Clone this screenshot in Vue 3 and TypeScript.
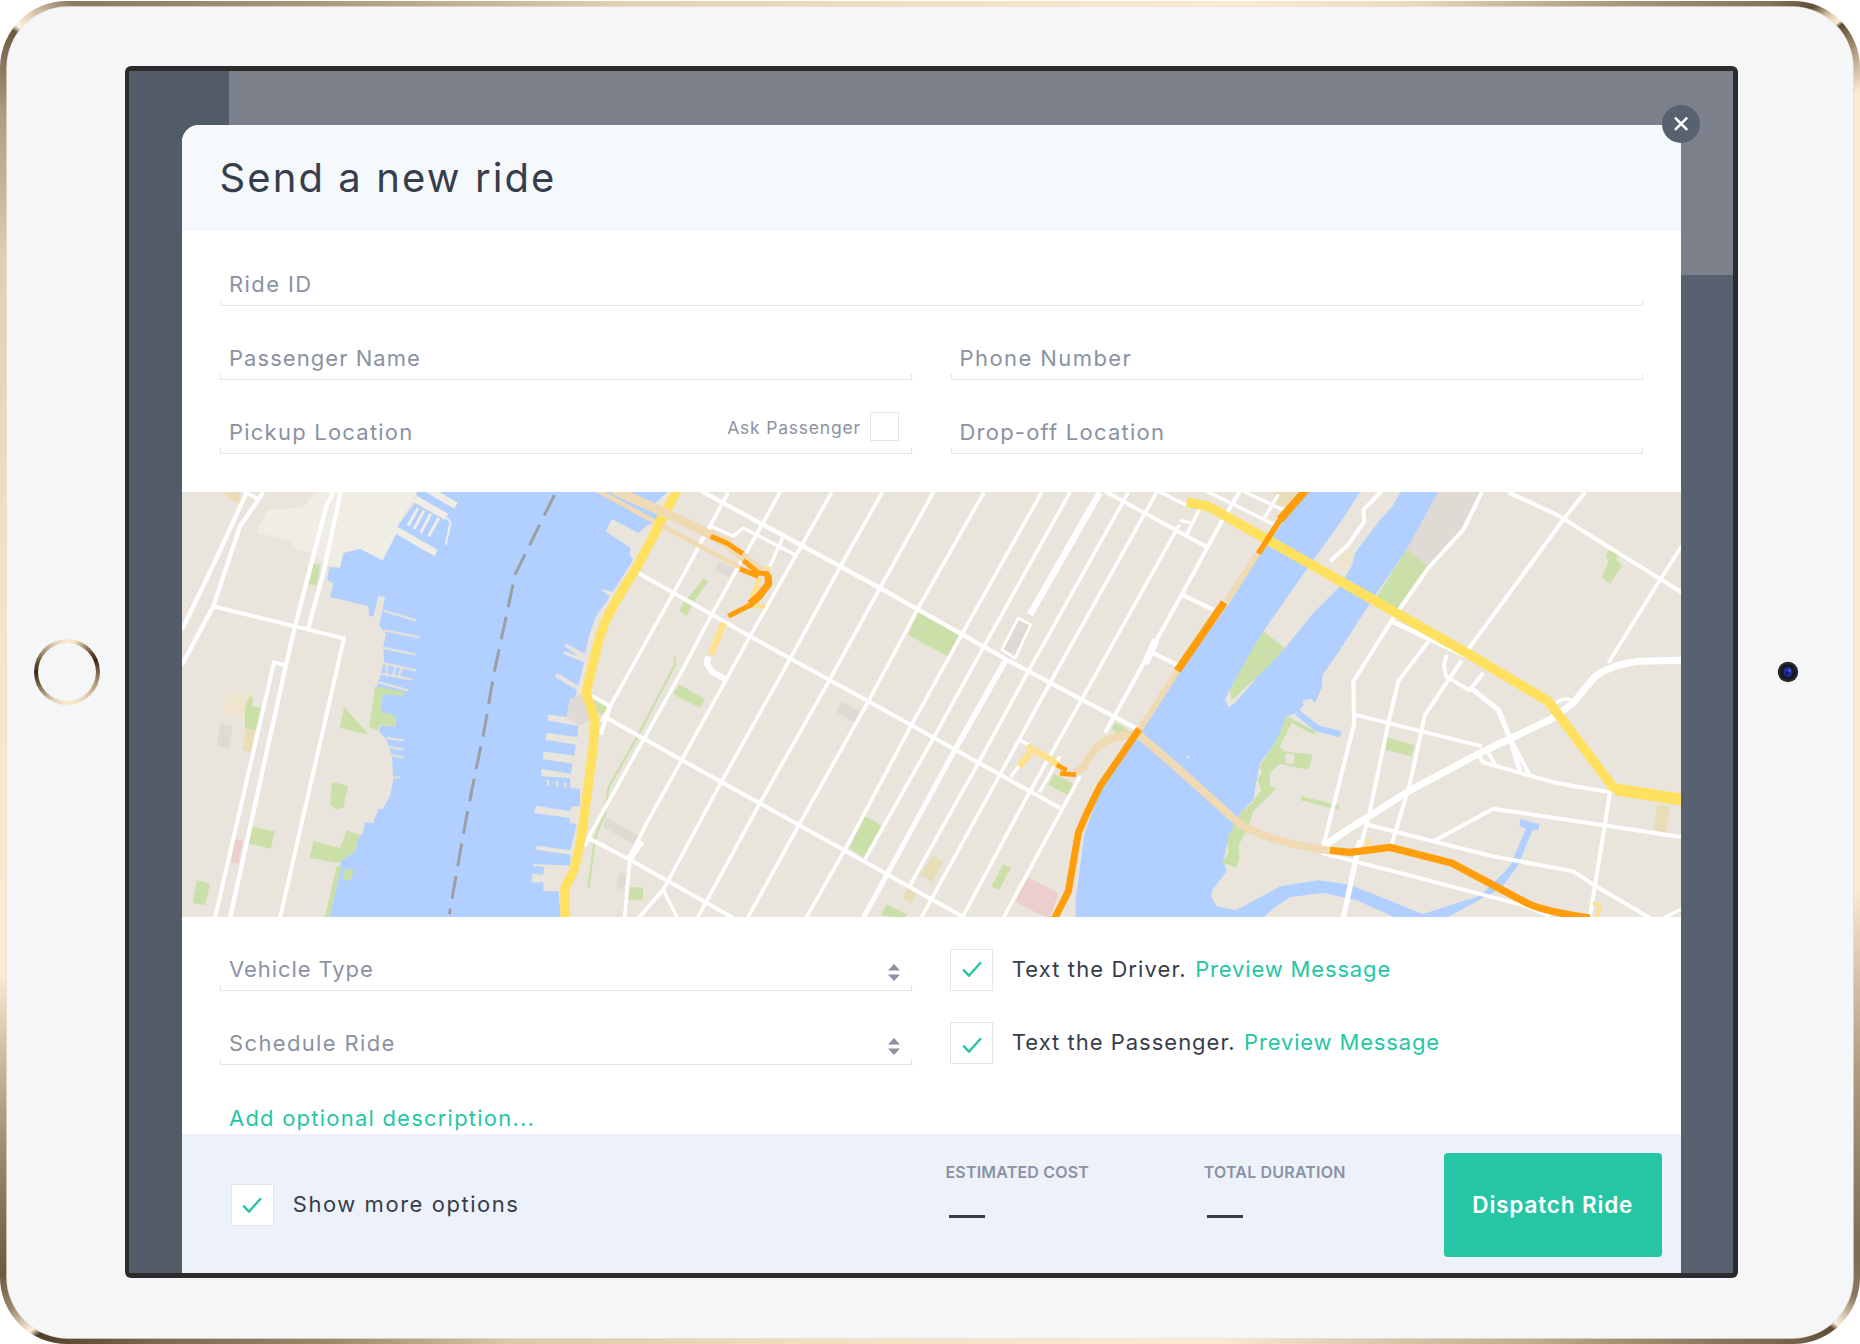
<script setup lang="ts">
import { ref } from 'vue'

interface Road {
  d: string
  w: number
}

const showMore = ref(true)
const textDriver = ref(true)
const textPassenger = ref(true)
const askPassenger = ref(false)

const checkPath = 'M1.2 8.6 L7 14.6 L19 1.2'

// Map geometry, three drawing units per CSS pixel
const streets: Road[] = [
  { d: 'M200 8L110 205L6 420', w: 13 },
  { d: 'M250 8L180 110L100 350L6 525', w: 13 },
  { d: 'M200 10L238 30', w: 11 },
  { d: 'M460 8L440 45L345 410L318 525L150 1285', w: 13 },
  { d: 'M482 8L430 250L385 415', w: 13 },
  { d: 'M100 350L492 446L300 1285', w: 12 },
  { d: 'M318 527L282 518L105 1285', w: 12 },
  { d: 'M1375 250L1710 440L2065 635L2640 955', w: 12 },
  { d: 'M1235 618L1290 650L1262 735', w: 12 },
  { d: 'M1275 682L1500 808L1990 1080L2355 1285', w: 12 },
  { d: 'M1225 1045L1350 1110L1510 1200L1660 1285', w: 12 },
  { d: 'M1565 5L2100 295L2480 510L2880 722', w: 13 },
  { d: 'M2775 5L3080 172', w: 12 },
  { d: 'M1645 8L1500 275L1265 695', w: 11 },
  { d: 'M1800 8L1595 375L1500 555L1230 1035L1215 1070', w: 11 },
  { d: 'M1955 8L1710 440L1500 820L1400 1000L1350 1100L1334 1285', w: 11 },
  { d: 'M1385 1055L1350 1105', w: 20 },
  { d: 'M2107 8L1980 232L1830 508L1625 875L1450 1200L1376 1285', w: 11 },
  { d: 'M1450 1200L1492 1285', w: 10 },
  { d: 'M2260 8L2100 295L1950 568L1740 940L1552 1285', w: 11 },
  { d: 'M2412 8L2215 355L2065 635L1860 1000L1703 1285', w: 11 },
  { d: 'M2585 8L2345 435L2195 705L1995 1080L1878 1285', w: 11 },
  { d: 'M2670 8L2412 470L2262 742L2055 1108', w: 11 },
  { d: 'M2760 8L2550 375', w: 20 },
  { d: 'M2478 510L2325 780', w: 17 },
  { d: 'M2325 780L2050 1285', w: 15 },
  { d: 'M2845 8L2545 545L2395 820L2188 1190', w: 11 },
  { d: 'M2930 8L2610 580L2460 855L2223 1285', w: 11 },
  { d: 'M2998 105L2705 630L2550 905L2346 1285', w: 11 },
  { d: 'M3180 5L3125 95L3005 315L2800 685L2775 730', w: 12 },
  { d: 'M2928 450L2895 522', w: 22 },
  { d: 'M2915 488L2995 527', w: 12 },
  { d: 'M3005 315L3100 360', w: 12 },
  { d: 'M2640 800L2578 908', w: 10 },
  { d: 'M2700 860L2470 1285', w: 11 },
  { d: 'M2518 750L2548 766M2520 825L2492 862', w: 10 },
  { d: 'M1560 155L1595 110L1660 140L1690 115L1845 195', w: 10 },
  { d: 'M1808 145L1765 240', w: 10 },
  { d: 'M1585 500L1580 522L1598 547L1638 570', w: 18 },
  { d: 'M2515 385L2465 480L2505 506L2552 405Z', w: 8 },
  { d: 'M3905 8L3850 120L3745 235L3640 385L3520 575L3522 705L3430 1068', w: 12 },
  { d: 'M3745 455L3655 575L3625 700L3565 985L3530 1110', w: 12 },
  { d: 'M3540 1050L3490 1285', w: 16 },
  { d: 'M4215 8L4150 90L3860 485', w: 12 },
  { d: 'M3845 512L3735 675L3690 880L3635 1065', w: 12 },
  { d: 'M3985 8L4130 75L4505 308', w: 12 },
  { d: 'M4505 170L4440 270L4285 520', w: 11 },
  { d: 'M4505 512L4380 515Q4300 522 4245 560L4180 640L4110 690L3900 790L3690 902L3500 1022L3430 1070', w: 21 },
  { d: 'M3800 495L3792 525L3798 560L3868 602L3910 550', w: 12 },
  { d: 'M3875 597L3955 660L3990 745L4020 845', w: 15 },
  { d: 'M3990 745L4050 858', w: 12 },
  { d: 'M3635 395L3860 500', w: 14 },
  { d: 'M3525 675L3905 770', w: 11 },
  { d: 'M3895 795L3910 818L4050 858L4130 880L4290 908L4230 1280', w: 12 },
  { d: 'M3925 790L3946 825', w: 11 },
  { d: 'M3555 1003L3760 1055L3940 1100L4180 1145L4240 1185L4410 1285', w: 12 },
  { d: 'M3760 1055L3940 957L4505 1042', w: 12 },
  { d: 'M3425 1090L3700 1160L4040 1250L4110 1280', w: 11 },
  { d: 'M4440 1290L4505 1258', w: 10 },
  { d: 'M3080 5L3290 108M3190 5L3330 70M3295 15L3250 90', w: 10 },
  { d: 'M2935 5L3030 52M3062 50L3020 135M3000 92L3040 102', w: 10 },
  { d: 'M4120 645Q4150 620 4175 632', w: 10 },
]

const parks: string[] = [
  '400,222 422,225 410,287 386,284',
  '208,620 220,622 216,650 243,654 228,722 195,718 194,655',
  '492,652 567,735 480,715',
  '585,590 675,608 670,620 608,612 603,665 648,680 643,710 598,706 592,722 568,712',
  '456,876 504,888 490,955 470,960 450,945',
  '215,1012 285,1025 272,1078 205,1062',
  '400,1053 480,1075 500,1022 540,1035 525,1085 475,1120 445,1115 390,1104',
  '470,1128 485,1130 448,1285 434,1285',
  '495,1135 520,1142 515,1170 488,1170',
  '50,1172 90,1182 75,1247 38,1240',
  '1236,625 1286,652 1272,678 1250,668',
  '1345,1192 1390,1194 1388,1232 1345,1230',
  '1570,266 1585,275 1542,335 1523,325',
  '1512,335 1537,345 1520,378 1498,365',
  '1500,585 1574,628 1560,656 1478,612',
  '2215,368 2337,437 2303,500 2184,436',
  '2055,980 2107,1008 2055,1106 2008,1075',
  '2470,1124 2493,1133 2457,1202 2433,1190',
  '2622,852 2678,882 2664,917 2605,885',
  '2120,1243 2180,1274 2170,1290 2103,1275',
  '2805,698 2845,722 2840,750 2795,718',
  '3680,180 3745,230 3655,360 3590,320',
  '3250,425 3315,475 3265,530 3155,632 3150,600 3205,500',
  '3320,680 3408,725 3403,735 3335,700 3300,770 3312,785 3398,795 3385,840 3300,822 3270,850 3270,890 3290,895 3220,965 3205,1010 3175,1070 3178,1110 3168,1135 3125,1118 3145,1090 3142,1045 3180,970 3215,940 3245,900 3232,870 3245,850 3238,830 3285,760',
  '3622,743 3703,767 3695,800 3617,780',
  '3365,920 3480,948 3475,962 3362,932',
  '4285,182 4312,192 4308,210 4327,228 4290,282 4265,262 4285,218 4278,200',
]

const plazas: string[] = [
  '122,700 158,710 145,778 110,768',
  '1280,985 1378,1040 1365,1068 1268,1010',
  '1322,1148 1342,1155 1330,1200 1305,1190',
  '1615,215 1662,235 1650,262 1604,242',
  '1985,635 2040,665 2025,700 1968,668',
  '2518,390 2548,405 2510,498 2472,478',
  '3775,5 3907,5 3850,120 3745,230 3680,180',
  '1170,630 1210,610 1240,690 1195,708 1160,682',
]

const civic: { p: string; c: string }[] = [
  { p: '145,608 205,612 192,682 132,670', c: '#efe4cd' },
  { p: '198,720 225,725 212,787 188,782', c: '#eaddb6' },
  { p: '130,8 178,8 188,45 150,30', c: '#eaddb6' },
  { p: '165,1050 188,1052 175,1122 152,1118', c: '#eccfcd' },
  { p: '2545,1163 2635,1210 2610,1285 2590,1280 2505,1235', c: '#eccfcd' },
  { p: '2260,1098 2290,1115 2258,1178 2218,1155', c: '#e8ddb9' },
  { p: '2180,1195 2212,1212 2195,1242 2170,1226', c: '#e8ddb9' },
  { p: '4432,945 4468,948 4458,1030 4420,1022', c: '#e8ddb9' },
  { p: '3280,5 3350,5 3320,50 3285,50', c: '#e8ddb9' },
  { p: '3488,180 3525,190 3500,240 3468,228', c: '#efe4cd' },
]
</script>

<template>
  <div class="stage">
    <div class="device">
      <div class="face">
        <div class="home"><div class="home-inner"></div></div>

        <div class="frame">
          <div class="screen">
            <section class="modal">
              <button class="close" aria-label="Close">
                <svg viewBox="0 0 38 38" width="38" height="38">
                  <path d="M13 12.7L25.2 24.9M25.2 12.7L13 24.9" stroke="#fff" stroke-width="2.6" fill="none" />
                </svg>
              </button>

              <header class="head"><h1>Send a new ride</h1></header>

              <div class="form top">
                <div class="field wide"><span class="t-ride">Ride ID</span></div>
                <div class="field"><span class="t-pname">Passenger Name</span></div>
                <div class="field"><span class="t-phone">Phone Number</span></div>
                <div class="field">
                  <span class="t-pick">Pickup Location</span>
                  <label class="ask" @click="askPassenger = !askPassenger">
                    <span class="t-ask">Ask Passenger</span><i class="mini"></i>
                  </label>
                </div>
                <div class="field"><span class="t-drop">Drop-off Location</span></div>
              </div>

              <svg class="map" viewBox="6 7 4497 1274" preserveAspectRatio="none">
                <rect x="0" y="0" width="4510" height="1290" fill="#e9e5dc" />
                <polygon fill="#f0ede4" points="412,0 715,0 655,105 650,135 608,212 540,178 490,190 480,232 440,225 395,190 350,180 330,155 230,128 262,62 370,52" />
                <polygon
                  fill="#b1d0ff"
                  points="712,0 708,35 655,105 650,130 608,212 540,178 490,190 480,235 448,232 442,270 460,282 450,322 565,350 568,380 580,380 595,320 615,322 598,408 618,432 610,470 612,515 598,570 588,595 608,620 600,665 648,680 645,710 600,708 597,725 620,750 636,800 640,870 630,920 608,958 595,958 580,1000 555,998 548,1032 537,1040 525,1085 485,1110 475,1140 446,1290 1142,1290 1136,1205 1090,1205 1090,1178 1055,1178 1057,1152 1090,1155 1092,1132 1058,1128 1060,1123 1170,1128 1172,1095 1068,1080 1070,1068 1172,1082 1190,1003 1170,1000 1168,985 1063,970 1068,948 1170,965 1175,950 1200,950 1200,898 1172,895 1170,865 1083,860 1085,838 1172,852 1178,822 1088,808 1090,785 1182,798 1188,765 1096,750 1100,730 1192,742 1195,710 1102,692 1105,675 1160,682 1170,630 1188,620 1190,600 1125,562 1132,550 1195,588 1212,518 1150,492 1152,484 1195,500 1154,470 1158,462 1215,492 1230,430 1245,385 1290,320 1265,302 1270,298 1297,308 1360,210 1348,195 1352,175 1277,125 1295,88 1375,130 1405,105 1435,100 1425,40 1470,0"
                />
                <g stroke="#f0ede4" fill="none">
                  <path d="M745 0L828 48M706 28L800 82M650 122L768 190" stroke-width="21" />
                  <path d="M714 55L684 108M732 62L702 118M752 72L722 130M776 85L746 140" stroke-width="9" />
                  <path d="M800 85L812 98L797 165" stroke-width="6" />
                </g>
                <g stroke="#e5e1d8" fill="none" stroke-width="7">
                  <path d="M608 363L708 392M612 422L720 443M610 475L706 494M605 520L708 542M604 552L698 570M596 578L685 602M620 745L672 752M622 772L672 780M632 795L670 804M640 863L660 864M620 525L620 560M645 528L640 562M665 535L655 562" />
                  <path d="M1103 870L1106 890M1130 874L1133 892M1155 878L1157 895" />
                </g>
                <path d="M1123 16L1005 255L985 350L940 560L915 710L890 830L860 980L840 1090L808 1274" fill="none" stroke="#9b9fa3" stroke-width="9" stroke-dasharray="69 30" />

                <polygon
                  fill="#b1d0ff"
                  points="3390,0 3310,95 3240,195 3145,345 3000,545 2885,720 2760,905 2714,1030 2687,1230 2687,1290 3240,1290 3290,1250 3330,1222 3430,1210 3530,1232 3660,1290 3790,1290 3918,1220 3965,1195 4015,1125 4058,1020 4075,1022 4078,1003 4022,988 4018,1008 4038,1016 3990,1130 3940,1180 3900,1218 3728,1273 3510,1185 3415,1172 3300,1190 3168,1262 3110,1250 3093,1220 3098,1200 3140,1145 3130,1110 3145,1050 3180,970 3220,930 3230,870 3240,820 3300,740 3320,680 3350,670 3372,645 3368,632 3395,628 3405,640 3425,595 3428,555 3480,480 3590,310 3680,180 3780,0"
                />
                <path d="M3352 668L3410 715L3482 734" fill="none" stroke="#b1d0ff" stroke-width="19" />
                <polygon fill="#e9e5dc" points="3545,0 3480,100 3400,210 3250,425 3215,500 3160,580 3135,630 3145,652 3165,640 3250,540 3315,475 3400,370 3480,290 3515,230 3525,190 3600,90 3638,50 3665,0" />
                <circle cx="3025" cy="802" r="5" fill="#e9e5dc" />

                <polygon v-for="(p, i) in plazas" :key="'z' + i" :points="p" fill="#dfdad3" />
                <polygon v-for="(c, i) in civic" :key="'c' + i" :points="c.p" :fill="c.c" />
                <polygon v-for="(p, i) in parks" :key="'p' + i" :points="p" fill="#cbe0a9" />
                <rect x="3315" y="792" width="28" height="30" rx="8" fill="#e9e5dc" />
                <path d="M3605 5L3550 60L3553 95L3505 165L3450 215" fill="none" stroke="#fff" stroke-width="12" />
                <path d="M1483 500L1485 525L1370 745L1285 895L1275 970L1245 1045L1225 1195" fill="none" stroke="#cbe0a9" stroke-width="7" />

                <path v-for="(r, i) in streets" :key="'r' + i" :d="r.d" :stroke-width="r.w" fill="none" stroke="#fff" stroke-linejoin="round" />

                <g fill="none" stroke="#ffe08d" stroke-width="20">
                  <path d="M1605 140L1655 155M1740 265L1715 325M1755 350L1690 348M1765 230L1758 260" stroke-width="14" />
                  <path d="M1632 400L1592 495M2540 770L2610 808L2640 832M2550 790L2518 830" />
                  <path d="M4238 1240L4260 1248L4252 1282M3560 1070L3572 1045" stroke-width="10" />
                </g>
                <g fill="none" stroke="#ffe15f" stroke-linejoin="round">
                  <path d="M1492 0L1435 110L1375 225L1310 330Q1270 395 1250 475L1218 610L1245 690L1240 770L1210 1000Q1195 1100 1180 1145L1155 1195L1155 1290" stroke-width="28" />
                  <path d="M3020 38L3085 50L3500 285L3860 490L4105 635L4300 893L4340 905L4505 930" stroke-width="29" />
                  <path d="M4310 900L4505 930" stroke-width="36" />
                </g>
                <g fill="none" stroke="#f0dab3" stroke-linejoin="round">
                  <path d="M1300 0L1500 90L1630 155L1745 245" stroke-width="28" />
                  <path d="M1248 0L1500 137L1690 238" stroke-width="14" />
                  <path d="M3230 195L3140 335M2995 540L2875 725" stroke-width="18" />
                  <path d="M2680 848Q2710 845 2720 815Q2770 725 2880 738L3000 842L3170 995Q3250 1055 3450 1083" stroke-width="24" />
                </g>
                <path d="M1445 80L1430 118" fill="none" stroke="#ffe15f" stroke-width="26" />
                <g fill="none" stroke="#ff9e0a" stroke-linejoin="round">
                  <path d="M1592 140L1640 160L1688 192" stroke-width="15" />
                  <path d="M1690 212L1735 250L1762 252L1766 282L1740 322L1710 347L1645 380M1680 238L1735 260" stroke-width="15" />
                  <path d="M1764 255L1766 282L1740 315L1710 342" stroke-width="22" />
                  <path d="M3380 0L3310 75L3235 192" stroke-width="17" />
                  <path d="M3378 0L3300 90" stroke-width="24" />
                  <path d="M3133 338L2992 543" stroke-width="23" />
                  <path d="M2878 718L2760 890Q2715 980 2695 1030L2665 1205L2622 1290" stroke-width="21" />
                  <path d="M2630 825L2660 842M2640 852L2688 855" stroke-width="14" />
                  <path d="M3450 1082L3510 1088L3630 1073L3815 1120L4040 1240Q4090 1265 4230 1285" stroke-width="22" />
                </g>
              </svg>

              <div class="form bottom">
                <div class="col">
                  <div class="field">
                    <span class="t-veh">Vehicle Type</span>
                    <svg class="sort" viewBox="0 0 12 17" width="12" height="17"><path d="M0 6.5L6 0L12 6.5ZM0 10.5H12L6 17Z" fill="#8a92a3" /></svg>
                  </div>
                  <div class="field">
                    <span class="t-sch">Schedule Ride</span>
                    <svg class="sort" viewBox="0 0 12 17" width="12" height="17"><path d="M0 6.5L6 0L12 6.5ZM0 10.5H12L6 17Z" fill="#8a92a3" /></svg>
                  </div>
                  <a class="desc t-desc">Add optional description...</a>
                </div>
                <div class="col checks">
                  <div class="opt">
                    <i class="box" @click="textDriver = !textDriver"><svg v-if="textDriver" viewBox="0 0 20 16" width="20" height="16"><path :d="checkPath" /></svg></i>
                    <span class="t-drv">Text the Driver.</span><a class="t-pv">Preview Message</a>
                  </div>
                  <div class="opt second">
                    <i class="box" @click="textPassenger = !textPassenger"><svg v-if="textPassenger" viewBox="0 0 20 16" width="20" height="16"><path :d="checkPath" /></svg></i>
                    <span class="t-psg">Text the Passenger.</span><a class="t-pv">Preview Message</a>
                  </div>
                </div>
              </div>

              <footer class="foot">
                <div class="opt more">
                  <i class="box" @click="showMore = !showMore"><svg v-if="showMore" viewBox="0 0 20 16" width="20" height="16"><path :d="checkPath" /></svg></i>
                  <span class="t-more">Show more options</span>
                </div>
                <div class="stat cost"><span>ESTIMATED COST</span><b></b></div>
                <div class="stat dur"><span>TOTAL DURATION</span><b></b></div>
                <button class="dispatch">Dispatch Ride</button>
              </footer>
            </section>
          </div>
        </div>

        <svg class="camera" viewBox="0 0 22 22" width="22" height="22">
          <circle cx="11" cy="11" r="10.2" fill="#25282b" />
          <circle cx="11" cy="11" r="7.5" fill="#17181f" />
          <ellipse cx="11" cy="11" rx="4.6" ry="5" fill="#1f2aa0" />
          <circle cx="12.4" cy="9.6" r="1.8" fill="#3a50d0" />
          <circle cx="10.4" cy="12" r="1.6" fill="#12175f" />
        </svg>
      </div>
    </div>
  </div>
</template>

<style>
html,
body {
  margin: 0;
  background: #fff;
}
</style>

<style scoped>
* {
  box-sizing: border-box;
}
.stage {
  width: 1860px;
  height: 1344px;
  padding-top: 1px;
  overflow: hidden;
  font-family: Inter, 'Open Sans', sans-serif;
  font-size: 22px;
  line-height: 36px;
  color: #363d4c;
}
.device {
  width: 1860px;
  height: 1342.5px;
  padding: 6px 7px 5.5px;
  border-radius: 67px;
  background: conic-gradient(
    #f3dfc2 0deg,
    #fdead2 25deg,
    #ecd9bd 36deg,
    #b5a387 44deg,
    #84745a 51.5deg,
    #5f4e36 53deg,
    #d9c5a6 53.8deg,
    #fff0dc 54.4deg,
    #5f4e36 54.6deg,
    #a8967a 56deg,
    #fdead2 58deg,
    #fdead2 103deg,
    #b09d82 113deg,
    #7d6c52 122deg,
    #8a795f 124deg,
    #fff0dc 125.7deg,
    #5f4e36 126deg,
    #7b6a50 128.5deg,
    #c0ad90 138deg,
    #fdead2 157deg,
    #f1dfc3 190deg,
    #dcc8ab 212deg,
    #9a886c 222deg,
    #7b6a50 229deg,
    #5b4a30 232.5deg,
    #4f3e26 233.4deg,
    #fff0dc 233.8deg,
    #9a886c 235.3deg,
    #6b5a40 237deg,
    #a08d72 243deg,
    #fdead2 252deg,
    #f5e3c8 275deg,
    #e3cfb2 294deg,
    #b09d82 301deg,
    #6b5a40 305deg,
    #fff5e4 305.3deg,
    #ead6b8 306deg,
    #8a7a60 308deg,
    #baa78b 322deg,
    #e3cfb2 335deg,
    #f3dfc2 360deg
  );
}
.face {
  display: flex;
  align-items: flex-start;
  width: 1846px;
  height: 1331px;
  border-radius: 61px;
  background: #f4f6f8;
  box-shadow: 0 0 0 0.7px #e9e0dc;
}
.home {
  width: 66px;
  height: 66px;
  margin: 631.5px 32px 0 26.5px;
  padding: 4px;
  border-radius: 50%;
  background: conic-gradient(#fdead2 0deg, #f3dfc2 15deg, #a58d6f 35deg, #5a4024 55deg, #3f2710 68deg, #7c6448 90deg, #b9a383 115deg, #e8d4b6 145deg, #fdead2 175deg, #e9d5b7 205deg, #8a7254 240deg, #3f2710 270deg, #6a5034 288deg, #a89072 310deg, #e8d4b6 338deg, #fdead2 360deg);
}
.home-inner {
  height: 58px;
  border-radius: 50%;
  background: #f4f6f8;
}
.frame {
  width: 1613px;
  height: 1212px;
  margin: 59px 38.7px 0 -6.5px;
  padding: 5px 5px 5px 4px;
  border-radius: 6px;
  background: #2b2c2b;
}
.screen {
  width: 1604px;
  height: 1202px;
  padding: 54px 0 0 53px;
  background:
    linear-gradient(#525c68, #525c68) 0 0 / 100px 100% no-repeat,
    linear-gradient(#7b808a, #7b808a) 0 0 / 100% 204px no-repeat,
    #586170;
}
.modal {
  position: relative;
  width: 1499px;
  height: 1148px;
  border-radius: 17px 0 0 0;
  background: #fff;
}
.close {
  position: absolute;
  top: -20px;
  right: -19px;
  width: 38px;
  height: 38px;
  padding: 0;
  border: 0;
  border-radius: 50%;
  background: #586170;
}
.close svg {
  display: block;
}
.head {
  height: 106px;
  padding: 38.2px 0 0 37.5px;
  border-radius: 17px 0 0 0;
  background: #f5f9fc;
}
h1 {
  margin: 0;
  font-size: 40px;
  line-height: 30px;
  font-weight: 400;
  letter-spacing: 2.1px;
  white-space: nowrap;
}
.form {
  display: grid;
  grid-template-columns: 692.5px 692.5px;
  column-gap: 38px;
  padding: 0 38px;
}
.top {
  height: 261.3px;
  padding-top: 35px;
  grid-auto-rows: 40px;
  row-gap: 34.2px;
}
.field {
  display: flex;
  height: 40px;
  padding: 0 10px 0 9px;
  color: #8a92a3;
  white-space: nowrap;
  border-bottom: 1.4px solid #dfe6ee;
  background:
    linear-gradient(#dfe6ee, #dfe6ee) 0 100% / 1.2px 5px no-repeat,
    linear-gradient(#dfe6ee, #dfe6ee) 100% 100% / 1.2px 5px no-repeat;
}
.wide {
  grid-column: 1 / 3;
}
.ask {
  display: flex;
  margin: -2px 4px 0 auto;
  font-size: 17.5px;
  line-height: 32px;
}
.mini {
  width: 29px;
  height: 29px;
  margin-left: 8.6px;
  border: 1.4px solid #dfe6ee;
  background: #fff;
}
.map {
  display: block;
  width: 1499px;
  height: 424.7px;
}
.bottom {
  height: 217px;
  padding-top: 34px;
}
.col {
  display: flex;
  flex-direction: column;
  gap: 34.3px;
}
.sort {
  margin: 13px 3px 0 auto;
}
.desc {
  height: 34px;
  padding-left: 9px;
}
a {
  color: #26c6a4;
  white-space: nowrap;
}
.checks {
  gap: 31px;
  margin: -2px 0 0 -0.2px;
}
.opt {
  display: flex;
  height: 42px;
  line-height: 40px;
  white-space: nowrap;
}
.opt a {
  margin-left: 8.4px;
}
.box {
  display: flex;
  width: 42.5px;
  height: 42.5px;
  margin-right: 19px;
  padding: 11.5px 0 0 10.2px;
  border: 1.4px solid #dfe6ee;
  background: #fff;
}
.second .box {
  padding-top: 14px;
}
.box svg {
  fill: none;
  stroke: #26c6a4;
  stroke-width: 2.4;
}
.foot {
  display: flex;
  height: 138.7px;
  background: #edf1fa;
}
.more {
  width: 714.2px;
  margin: 50px 0 0 49.3px;
}
.more .box {
  padding-top: 12.3px;
}
.stat {
  width: 258.3px;
  padding-top: 28px;
  font-size: 16px;
  line-height: 20px;
  font-weight: 600;
  letter-spacing: 0.18px;
  color: #8a92a3;
  white-space: nowrap;
}
.stat.dur {
  width: 240px;
}
.stat span,
.stat b {
  display: block;
}
.stat b {
  width: 36px;
  height: 3.4px;
  margin: 33px 0 0 3.5px;
  background: #363d4c;
}
.dispatch {
  width: 218px;
  height: 104px;
  margin-top: 19px;
  padding: 0;
  border: 0;
  border-radius: 4px;
  background: #26c6a4;
  color: #fff;
  font: 600 22.5px/30px Inter, 'Open Sans', sans-serif;
  letter-spacing: 0.85px;
  white-space: nowrap;
}
.camera {
  margin-top: 654px;
}
.t-ride {
  letter-spacing: 1.4px;
}
.t-pname {
  letter-spacing: 1.05px;
}
.t-phone {
  letter-spacing: 1.42px;
}
.t-pick,
.t-drop {
  letter-spacing: 1.22px;
}
.t-ask {
  letter-spacing: 0.8px;
}
.t-veh {
  letter-spacing: 0.92px;
}
.t-sch {
  letter-spacing: 1.35px;
}
.t-desc {
  letter-spacing: 1.22px;
}
.t-drv {
  letter-spacing: 1.08px;
}
.t-psg {
  letter-spacing: 1px;
}
.t-pv {
  letter-spacing: 0.84px;
}
.t-more {
  letter-spacing: 1.54px;
}
</style>
